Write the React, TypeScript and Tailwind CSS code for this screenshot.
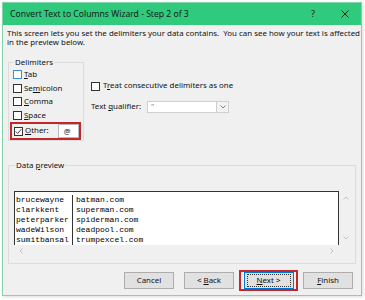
import React from "react";

const font = { fontFamily: '"Noto Sans", Arial, sans-serif' };

function U({ children }: { children: React.ReactNode }) {
  return <span className="underline underline-offset-[1px]">{children}</span>;
}

function Box({ checked = false, blue = false }: { checked?: boolean; blue?: boolean }) {
  return (
    <span
      className={`flex h-[9px] w-[9px] shrink-0 items-center justify-center border bg-white ${
        blue ? "border-[#3b8fd8]" : "border-[#333333]"
      }`}
    >
      {checked && (
        <svg width="7" height="7" viewBox="0 0 7 7">
          <path d="M0.8 3.6 L2.7 5.5 L6.3 1.2" fill="none" stroke="#333" strokeWidth="0.9" />
        </svg>
      )}
    </span>
  );
}

function Btn({ children, focus = false }: { children: React.ReactNode; focus?: boolean }) {
  return (
    <div
      className={`flex h-[17px] w-[50px] items-center justify-center bg-[#e1e1e1] ${
        focus ? "border border-[#0078d7]" : "border border-[#adadad]"
      }`}
    >
      {focus ? (
        <div className="flex h-[13px] w-[44px] items-center justify-center border border-dotted border-[#333]">
          <span>{children}</span>
        </div>
      ) : (
        <span>{children}</span>
      )}
    </div>
  );
}

const rows = [
  ["brucewayne", "batman.com"],
  ["clarkkent", "superman.com"],
  ["peterparker", "spiderman.com"],
  ["wadeWilson", "deadpool.com"],
  ["sumitbansal", "trumpexcel.com"],
];

export default function App() {
  return (
    <div className="h-[300px] w-[365px] bg-white pl-[2px] pt-[2px] text-[7.9px] text-[#111]" style={font}>
      <div className="flex h-[294px] w-[360px] flex-col border border-[#86d2ab] bg-[#f0f0f0] shadow-[1px_1px_3px_rgba(0,0,0,0.15)]">
        {/* title bar */}
        <div className="flex h-[22px] shrink-0 items-center bg-[#2fca7c] pl-[7px] pr-[12px] text-[8.6px] text-[#1a1a1a]">
          <span>Convert Text to Columns Wizard - Step 2 of 3</span>
          <span className="ml-auto mr-[26px] text-[9px]">?</span>
          <svg width="8" height="8" viewBox="0 0 8 8">
            <path d="M0.5 0.5 L7.5 7.5 M7.5 0.5 L0.5 7.5" stroke="#1a1a1a" strokeWidth="0.9" />
          </svg>
        </div>

        {/* description */}
        <div className="mt-[4px] whitespace-nowrap pl-[4px] leading-[8.6px]">
          This screen lets you set the delimiters your data contains.&nbsp; You can see how your text is affected
          <br />
          in the preview below.
        </div>

        {/* options */}
        <div className="mt-[12px] flex">
          <fieldset className="ml-[5px] h-[83px] w-[76px] border border-[#dcdcdc] pl-[4px]">
            <legend className="ml-[1px] px-[1px] leading-[9px]">Delimiters</legend>
            <div className="mt-[1px] flex flex-col">
              <label className="flex h-[13.5px] items-center gap-[2px]">
                <Box blue />
                <span><U>T</U>ab</span>
              </label>
              <label className="flex h-[13.5px] items-center gap-[2px]">
                <Box />
                <span>Se<U>m</U>icolon</span>
              </label>
              <label className="flex h-[13.5px] items-center gap-[2px]">
                <Box />
                <span><U>C</U>omma</span>
              </label>
              <label className="flex h-[13.5px] items-center gap-[2px]">
                <Box />
                <span><U>S</U>pace</span>
              </label>
              <div className="-ml-[3px] flex h-[18px] w-[71px] items-center gap-[2px] border-2 border-[#c3272b] pl-[2px]">
                <Box checked />
                <span><U>O</U>ther:</span>
                <span className="ml-[7px] flex h-[14px] w-[21px] items-center border border-[#b9b9b9] bg-white pl-[5px] text-[7.5px]">
                  @
                </span>
              </div>
            </div>
          </fieldset>

          <div className="ml-[7px] mt-[22px] flex flex-col">
            <label className="flex items-center gap-[3px]">
              <Box />
              <span>T<U>r</U>eat consecutive delimiters as one</span>
            </label>
            <div className="mt-[9px] flex items-center">
              <span>Text <U>q</U>ualifier:</span>
              <div className="ml-[6px] flex h-[12px] w-[82px] items-center border border-[#cfcfcf] bg-white">
                <span className="pl-[3px] text-[#888]">"</span>
                <span className="ml-auto flex h-full w-[12px] items-center justify-center border-l border-[#cfcfcf] bg-[#f3f3f3]">
                  <svg width="6" height="4" viewBox="0 0 6 4">
                    <path d="M0.5 0.5 L3 3 L5.5 0.5" fill="none" stroke="#666" strokeWidth="0.8" />
                  </svg>
                </span>
              </div>
            </div>
          </div>
        </div>

        {/* data preview */}
        <fieldset className="ml-[5px] mt-[20px] h-[103px] w-[348px] border border-[#dcdcdc] pl-[5px]">
          <legend className="ml-[1px] px-[1px] leading-[9px]">
            Data <U>p</U>review
          </legend>
          <div className="mt-[21px] flex">
            <div
              className="flex h-[54px] w-[325px] border-x border-t border-[#333] bg-white pt-[3px] text-[8px] leading-[10px] text-black"
              style={{ fontFamily: '"Liberation Mono", "Courier New", monospace' }}
            >
              <div className="w-[58px] border-r border-[#333] pl-[1px]">
                {rows.map((r) => (
                  <div key={r[0]}>{r[0]}</div>
                ))}
              </div>
              <div className="pl-[3px]">
                {rows.map((r) => (
                  <div key={r[1]}>{r[1]}</div>
                ))}
              </div>
            </div>
            <div className="flex w-[14px] flex-col items-center justify-between py-[5px]">
              <svg width="6" height="4" viewBox="0 0 6 4">
                <path d="M0.5 3.5 L3 1 L5.5 3.5" fill="none" stroke="#b8b8b8" strokeWidth="0.8" />
              </svg>
              <svg width="6" height="4" viewBox="0 0 6 4">
                <path d="M0.5 0.5 L3 3 L5.5 0.5" fill="none" stroke="#b8b8b8" strokeWidth="0.8" />
              </svg>
            </div>
          </div>
          <div className="flex h-[11px] w-[325px] items-center justify-between px-[5px]">
            <svg width="4" height="6" viewBox="0 0 4 6">
              <path d="M3.5 0.5 L1 3 L3.5 5.5" fill="none" stroke="#b8b8b8" strokeWidth="0.8" />
            </svg>
            <svg width="4" height="6" viewBox="0 0 4 6">
              <path d="M0.5 0.5 L3 3 L0.5 5.5" fill="none" stroke="#b8b8b8" strokeWidth="0.8" />
            </svg>
          </div>
        </fieldset>

        {/* buttons */}
        <div className="mt-[6px] flex items-center pl-[121px]">
          <Btn>Cancel</Btn>
          <div className="ml-[10px]">
            <Btn>
              &lt; <U>B</U>ack
            </Btn>
          </div>
          <div className="ml-[5px] flex h-[21px] w-[59px] items-center justify-center border-2 border-[#c3272b]">
            <Btn focus>
              <U>N</U>ext &gt;
            </Btn>
          </div>
          <div className="ml-[5px]">
            <Btn>
              <U>F</U>inish
            </Btn>
          </div>
        </div>
      </div>
    </div>
  );
}
